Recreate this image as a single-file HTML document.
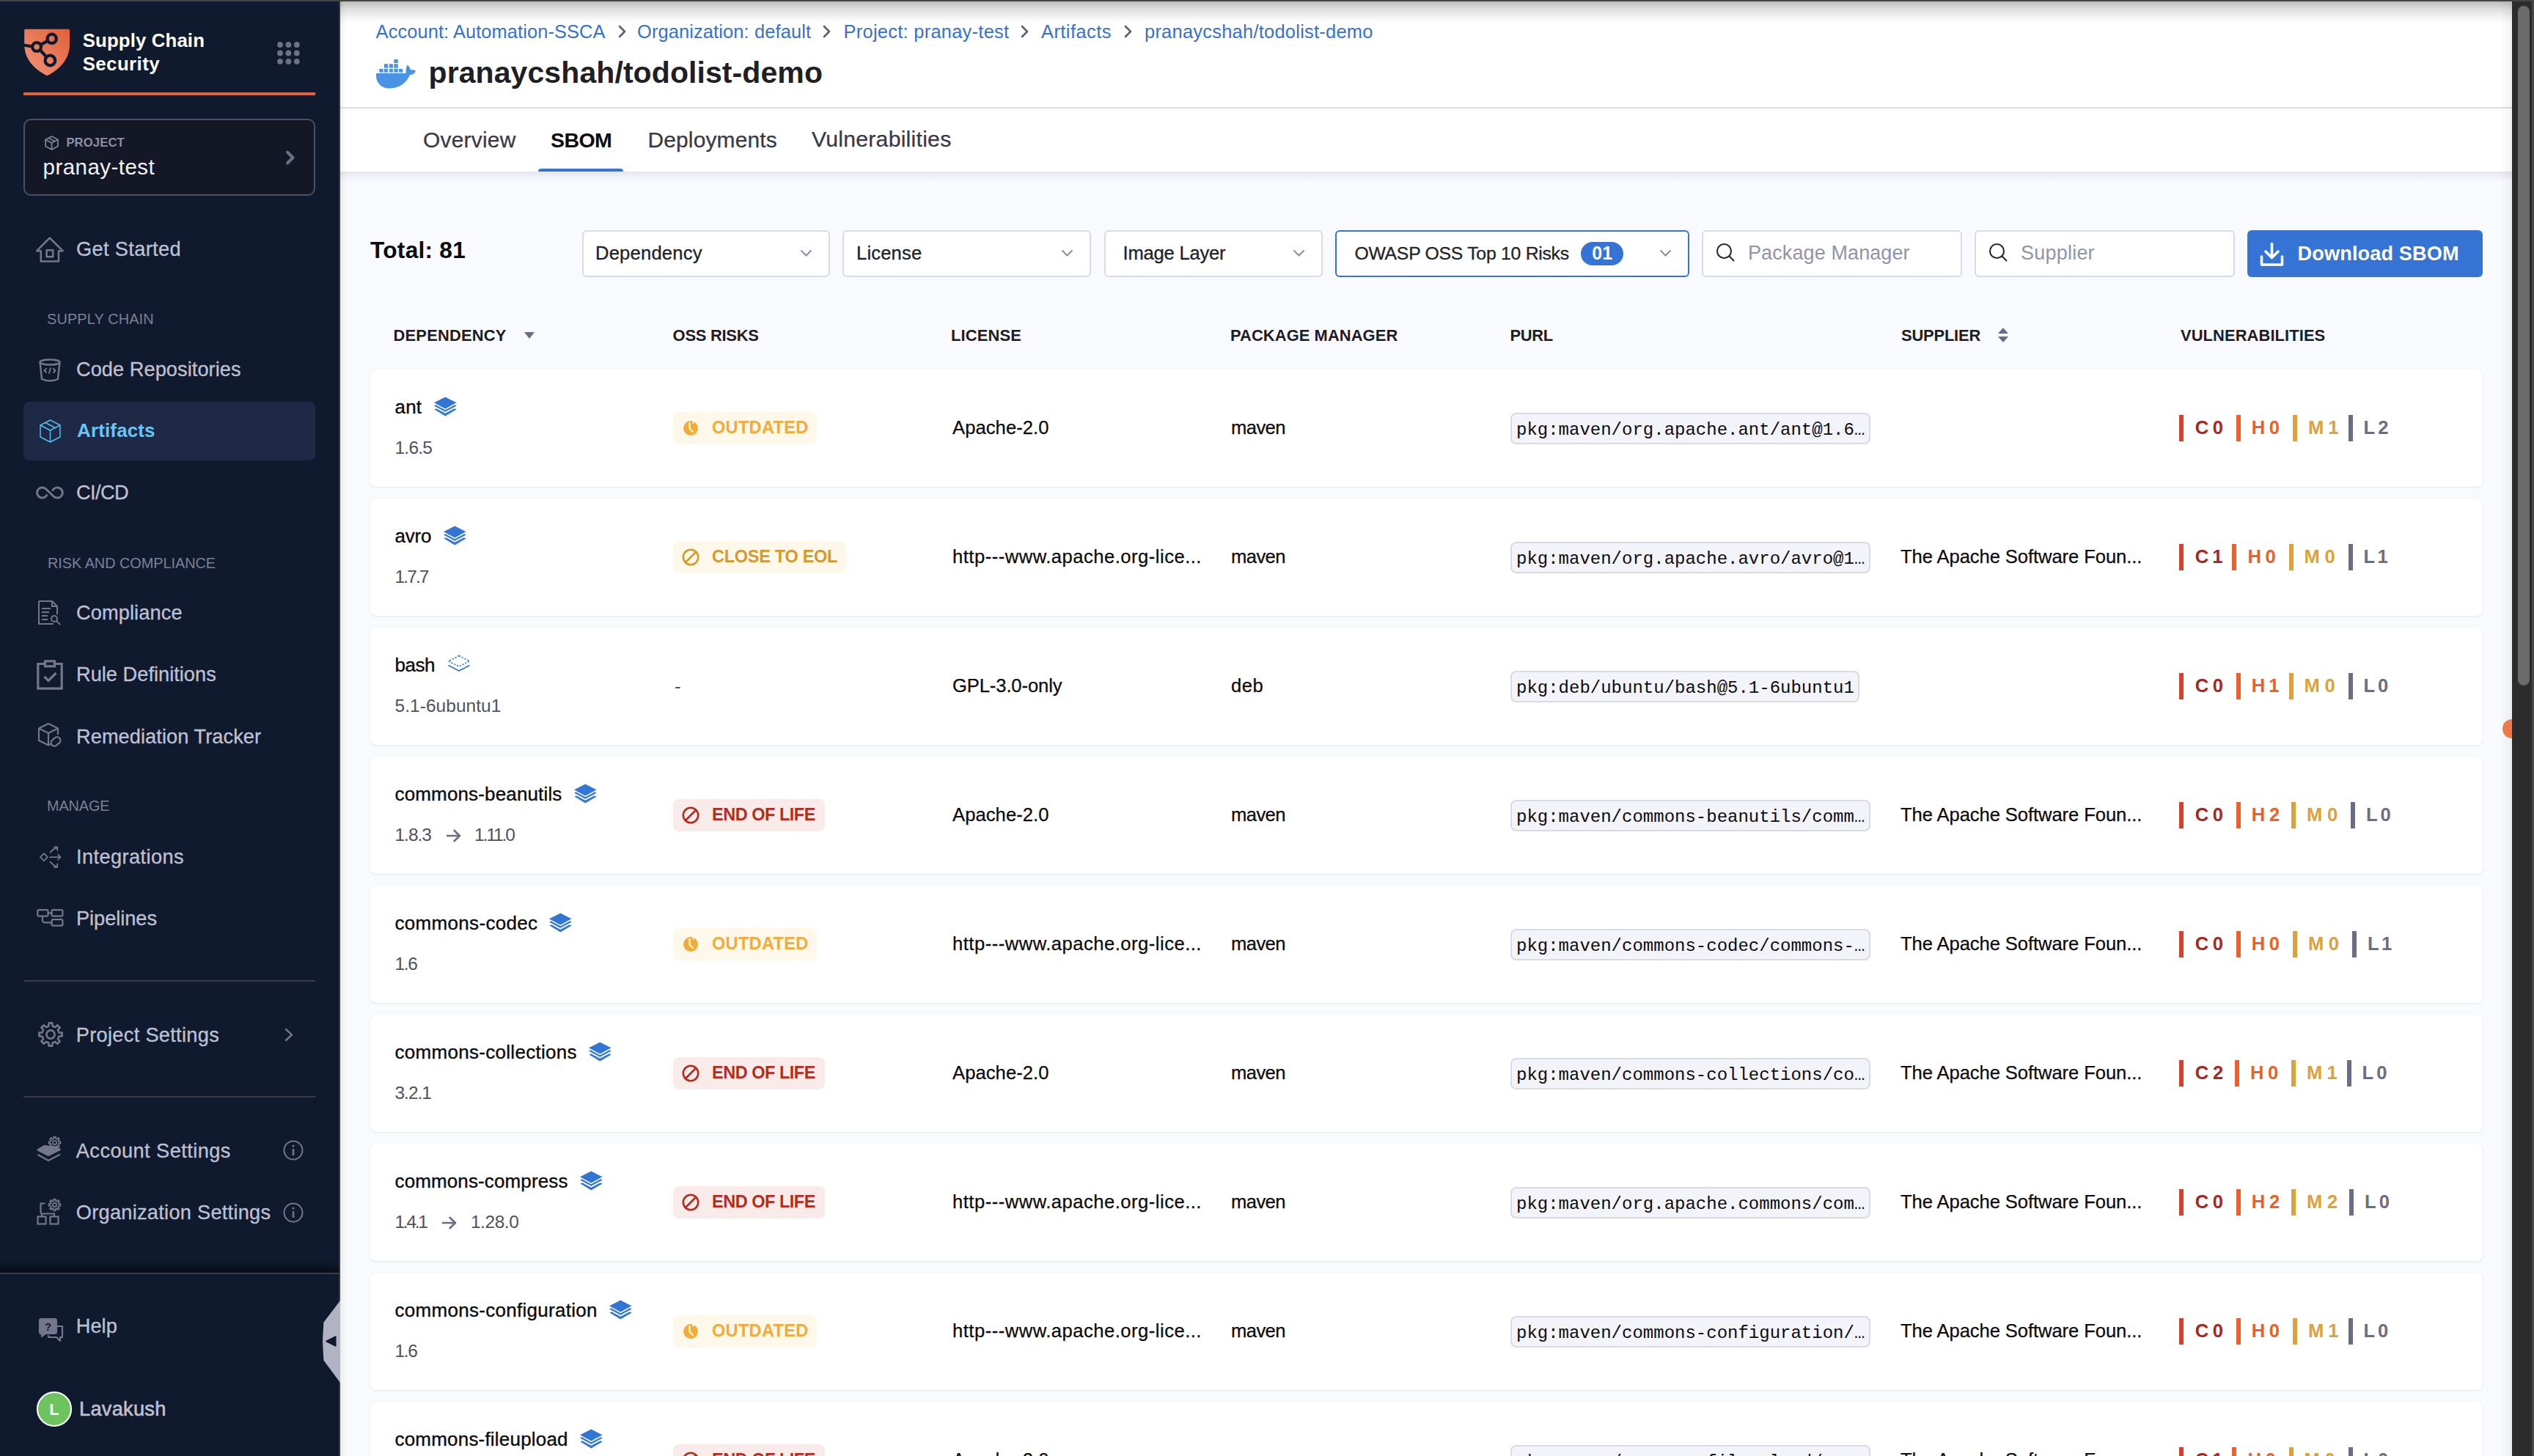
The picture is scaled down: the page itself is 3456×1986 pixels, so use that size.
<!DOCTYPE html>
<html><head><meta charset="utf-8"><title>SBOM</title>
<style>
html,body{margin:0;padding:0;}
body{width:3456px;height:1986px;overflow:hidden;position:relative;background:#f9fafd;font-family:'Liberation Sans', sans-serif;}
.a{position:absolute;}
.t{position:absolute;white-space:nowrap;}
svg.a{overflow:visible;}
</style></head><body>
<div class="a" style="left:464.0px;top:2.0px;width:2962.0px;height:1984.0px;background:#f9fafd;"></div><div class="a" style="left:464.0px;top:2.0px;width:2962.0px;height:232.0px;background:#ffffff;"></div><div class="a" style="left:464.0px;top:146.0px;width:2962.0px;height:2.0px;background:#dcdde6;"></div><div class="a" style="left:464.0px;top:234.0px;width:2962.0px;height:14.0px;background:linear-gradient(#e6e7ee,rgba(248,249,252,0));"></div><div class="a" style="left:464.0px;top:2.0px;width:2962.0px;height:32.0px;background:linear-gradient(rgba(0,0,0,0.26),rgba(0,0,0,0.12) 35%,rgba(0,0,0,0.03) 75%,rgba(0,0,0,0));"></div><div class="a" style="left:464.0px;top:2.0px;width:8.0px;height:1984.0px;background:linear-gradient(90deg,rgba(0,0,0,0.06),rgba(0,0,0,0));"></div><div class="a" style="left:3410.0px;top:2.0px;width:16.0px;height:1984.0px;background:linear-gradient(90deg,rgba(0,0,0,0),rgba(0,0,0,0.05));"></div><div class="a" style="left:0.0px;top:2.0px;width:462.0px;height:1984.0px;background:#0f1a2e;"></div><div class="a" style="left:462.0px;top:2.0px;width:2.0px;height:1984.0px;background:#34363f;"></div><div class="a" style="left:0.0px;top:0.0px;width:3456.0px;height:2.0px;background:#434544;"></div><div class="a" style="left:3413.0px;top:981.0px;width:26.0px;height:26.0px;background:#ee7a4b;border-radius:50%;"></div><div class="a" style="left:3426.0px;top:2.0px;width:30.0px;height:1984.0px;background:#2c2c2c;"></div><div class="a" style="left:3453.0px;top:2.0px;width:3.0px;height:1984.0px;background:#474747;"></div><div class="a" style="left:3434.0px;top:8.0px;width:16.0px;height:927.0px;background:#6b6b6b;border-radius:8px;"></div><svg class="a" style="left:28.0px;top:34.0px;" width="72" height="74" viewBox="0 0 72 74">
<defs><linearGradient id="lg" x1="1" y1="0" x2="0" y2="1">
<stop offset="0" stop-color="#e0603a"/><stop offset="1" stop-color="#f09678"/></linearGradient></defs>
<path d="M6.5 5.8 H65.5 Q67 5.8 67 7.5 V27 C67 45 55 60 36.3 69.3 C17 60 5.2 45 5.2 27 V7.5 Q5.2 5.8 6.5 5.8 Z" fill="url(#lg)"/>
<g stroke="#0f1a2e" stroke-width="4.3" fill="none">
<circle cx="42.7" cy="18.8" r="6.1"/>
<circle cx="22.1" cy="30" r="5.9"/>
<circle cx="40.4" cy="48.5" r="6.8"/>
<path d="M27.3 27.2 L37.3 21.7 M26.5 34 L35.3 43.6 M16.3 29.5 L4 27.5"/>
</g></svg><div class="t" style="left:112.7px;top:43.3px;font-size:25.80px;line-height:25.80px;color:#ffffff;font-weight:700;letter-spacing:0.128px;">Supply Chain</div><div class="t" style="left:112.7px;top:74.5px;font-size:25.80px;line-height:25.80px;color:#ffffff;font-weight:700;letter-spacing:0.433px;">Security</div><svg class="a" style="left:378.0px;top:57.0px;" width="31" height="31" viewBox="0 0 31 31"><circle cx="4.0" cy="4.0" r="3.9" fill="#6e7089"/><circle cx="4.0" cy="15.4" r="3.9" fill="#6e7089"/><circle cx="4.0" cy="26.8" r="3.9" fill="#6e7089"/><circle cx="15.4" cy="4.0" r="3.9" fill="#6e7089"/><circle cx="15.4" cy="15.4" r="3.9" fill="#6e7089"/><circle cx="15.4" cy="26.8" r="3.9" fill="#6e7089"/><circle cx="26.8" cy="4.0" r="3.9" fill="#6e7089"/><circle cx="26.8" cy="15.4" r="3.9" fill="#6e7089"/><circle cx="26.8" cy="26.8" r="3.9" fill="#6e7089"/></svg><div class="a" style="left:32.0px;top:126.0px;width:398.0px;height:4.0px;background:#e6623c;"></div><div class="a" style="left:32.0px;top:162.0px;width:398.0px;height:105.0px;background:#141826;border:2px solid #4d5064;border-radius:10px;box-sizing:border-box;"></div><svg class="a" style="left:60.0px;top:184.0px;" width="21" height="22" viewBox="0 0 21 22"><g fill="none" stroke="#7f8198" stroke-width="1.8" stroke-linejoin="round"><path d="M10.5 2 L19 6.5 V15.5 L10.5 20 L2 15.5 V6.5 Z"/><path d="M2 6.5 L10.5 11 L19 6.5 M10.5 11 V20 M6.2 4.2 L14.8 8.8"/></g></svg><div class="t" style="left:90.4px;top:187.2px;font-size:16.60px;line-height:16.60px;color:#8d8fa6;font-weight:700;letter-spacing:0.165px;">PROJECT</div><div class="t" style="left:58.6px;top:212.9px;font-size:29.50px;line-height:29.50px;color:#f2f2f7;letter-spacing:0.459px;">pranay-test</div><svg class="a" style="left:388.0px;top:204.0px;" width="16" height="22" viewBox="0 0 16 22"><path d="M4 3.5 L11.5 11 L4 18.5" fill="none" stroke="#6e7088" stroke-width="4" stroke-linecap="round" stroke-linejoin="round"/></svg><div class="t" style="left:104.0px;top:326.4px;font-size:27.20px;line-height:27.20px;color:#bfc0d2;letter-spacing:0.354px;-webkit-text-stroke:0.3px #bfc0d2;">Get Started</div><svg class="a" style="left:49.0px;top:323.0px;" width="38" height="36" viewBox="0 0 38 36"><g fill="none" stroke="#74768d" stroke-width="2.5" stroke-linejoin="round"><path d="M1.2 19.2 L18.8 1.5 L36.6 19.2 H31 V33.5 H6.8 V19.2 Z"/><rect x="14.6" y="18.2" width="8.6" height="9"/></g></svg><div class="t" style="left:64.0px;top:426.1px;font-size:19.90px;line-height:19.90px;color:#7d7f95;letter-spacing:0.141px;">SUPPLY CHAIN</div><div class="t" style="left:104.0px;top:489.6px;font-size:27.20px;line-height:27.20px;color:#bfc0d2;letter-spacing:0.054px;-webkit-text-stroke:0.3px #bfc0d2;">Code Repositories</div><svg class="a" style="left:52.0px;top:489.0px;" width="32" height="32" viewBox="0 0 32 32"><g fill="none" stroke="#74768d" stroke-width="2.4"><ellipse cx="16" cy="5" rx="13.5" ry="3.5"/><path d="M2.5 5 L5 28 Q16 33 27 28 L29.5 5"/><path d="M11.5 13.5 L8.5 16.5 L11.5 19.5 M20.5 13.5 L23.5 16.5 L20.5 19.5 M17.2 12.5 L14.8 20.5" stroke-width="2"/></g></svg><div class="a" style="left:32.0px;top:548.0px;width:398.0px;height:80.0px;background:#1e2a45;border-radius:8px;"></div><svg class="a" style="left:53.0px;top:571.0px;" width="31" height="34" viewBox="0 0 31 34"><g fill="none" stroke="#56bbee" stroke-width="1.5" stroke-linejoin="round"><path d="M15.5 2 L29 9 V25 L15.5 32 L2 25 V9 Z"/><path d="M2 9 L15.5 16 L29 9 M15.5 16 V32 M8.7 5.5 L22.3 12.5"/></g></svg><div class="t" style="left:105.0px;top:574.7px;font-size:25.90px;line-height:25.90px;color:#67c6f5;font-weight:700;letter-spacing:0.185px;">Artifacts</div><div class="t" style="left:104.0px;top:657.9px;font-size:27.20px;line-height:27.20px;color:#bfc0d2;letter-spacing:-0.603px;-webkit-text-stroke:0.3px #bfc0d2;">CI/CD</div><svg class="a" style="left:49.0px;top:661.0px;" width="38" height="22" viewBox="0 0 38 22"><path d="M14.8 14.5 A7.1 7.1 0 1 1 13.7 6 L24.1 16 A7.1 7.1 0 1 0 23 7.5" fill="none" stroke="#74768d" stroke-width="3" stroke-linecap="round"/></svg><div class="t" style="left:65.0px;top:758.9px;font-size:19.90px;line-height:19.90px;color:#7d7f95;letter-spacing:-0.045px;">RISK AND COMPLIANCE</div><div class="t" style="left:104.0px;top:822.4px;font-size:27.20px;line-height:27.20px;color:#bfc0d2;letter-spacing:0.111px;-webkit-text-stroke:0.3px #bfc0d2;">Compliance</div><svg class="a" style="left:51.0px;top:818.0px;" width="33" height="35" viewBox="0 0 33 35"><g fill="none" stroke="#74768d" stroke-width="2"><path d="M2 2 H20 L27 9 V20 M2 2 V33 H22"/><path d="M20 2 V9 H27 M6 12 H18 M6 17 H16 M6 22 H14 M6 27 H14"/><circle cx="23" cy="26" r="4"/><path d="M26 29 L31 34"/></g></svg><div class="t" style="left:104.0px;top:905.9px;font-size:27.20px;line-height:27.20px;color:#bfc0d2;letter-spacing:0.022px;-webkit-text-stroke:0.3px #bfc0d2;">Rule Definitions</div><svg class="a" style="left:50.0px;top:900.0px;" width="36" height="41" viewBox="0 0 36 41"><g fill="none" stroke="#74768d" stroke-width="3.2"><path d="M10 5.5 H1.8 V39.2 H34.2 V5.5 H26"/><rect x="11.5" y="1.8" width="13" height="7"/><path d="M10.5 23 L16 28.5 L26.5 18"/></g></svg><div class="t" style="left:104.0px;top:990.5px;font-size:27.20px;line-height:27.20px;color:#bfc0d2;letter-spacing:0.071px;-webkit-text-stroke:0.3px #bfc0d2;">Remediation Tracker</div><svg class="a" style="left:51.0px;top:985.0px;" width="34" height="38" viewBox="0 0 34 38"><g fill="none" stroke="#74768d" stroke-width="2.2" stroke-linejoin="round"><path d="M15 2 L28 8.5 V17 M15 2 L2 8.5 V25 L15 31.5 L18 30 M2 8.5 L15 15 L28 8.5 M15 15 V31.5"/><rect x="18" y="22" width="14" height="9" rx="4.5" transform="rotate(-40 25 26.5)"/></g></svg><div class="t" style="left:64.0px;top:1090.1px;font-size:19.90px;line-height:19.90px;color:#7d7f95;letter-spacing:-0.131px;">MANAGE</div><div class="t" style="left:104.0px;top:1154.9px;font-size:27.20px;line-height:27.20px;color:#bfc0d2;letter-spacing:0.408px;-webkit-text-stroke:0.3px #bfc0d2;">Integrations</div><svg class="a" style="left:54.0px;top:1154.0px;" width="32" height="31" viewBox="0 0 32 31"><g fill="none" stroke="#74768d" stroke-width="1.8" stroke-linecap="round" stroke-linejoin="round"><path d="M5.9 10.1 L10.9 15.1 L5.9 20.1 L0.9 15.1 Z"/><path d="M14.2 15.1 H28.5 M25 11.6 L28.5 15.1 L25 18.6"/><path d="M14.5 8.6 Q18.5 3.8 24.2 1.6 M19.8 1.4 H24.2 V5.8"/><path d="M14.5 21.6 Q18.5 26.4 24.2 28.6 M19.8 28.8 H24.2 V24.4"/></g></svg><div class="t" style="left:104.0px;top:1238.9px;font-size:27.20px;line-height:27.20px;color:#bfc0d2;letter-spacing:-0.044px;-webkit-text-stroke:0.3px #bfc0d2;">Pipelines</div><svg class="a" style="left:50.0px;top:1240.0px;" width="37" height="24" viewBox="0 0 37 24"><g fill="none" stroke="#74768d" stroke-width="2.2"><rect x="1.3" y="1.2" width="14.2" height="8.4" rx="1.6"/><rect x="20.6" y="1.2" width="14.8" height="8.4" rx="1.6"/><rect x="20.6" y="14.2" width="14.8" height="8.4" rx="1.6"/><path d="M15.5 5.4 H20.6 M7.9 9.6 V14.6 Q7.9 18.4 11.7 18.4 H20.6"/></g></svg><div class="a" style="left:32.0px;top:1337.0px;width:398.0px;height:2.0px;background:#3a3c4b;"></div><div class="t" style="left:103.8px;top:1397.9px;font-size:27.20px;line-height:27.20px;color:#bfc0d2;letter-spacing:0.302px;-webkit-text-stroke:0.3px #bfc0d2;">Project Settings</div><svg class="a" style="left:51.0px;top:1393.0px;" width="36" height="36" viewBox="0 0 36 36"><g fill="none" stroke="#74768d" stroke-width="2.6" stroke-linejoin="round"><path d="M15.43 6.48 L15.66 2.37 L20.34 2.37 L20.57 6.48 L24.32 8.04 L27.40 5.30 L30.70 8.60 L27.96 11.68 L29.52 15.43 L33.63 15.66 L33.63 20.34 L29.52 20.57 L27.96 24.32 L30.70 27.40 L27.40 30.70 L24.32 27.96 L20.57 29.52 L20.34 33.63 L15.66 33.63 L15.43 29.52 L11.68 27.96 L8.60 30.70 L5.30 27.40 L8.04 24.32 L6.48 20.57 L2.37 20.34 L2.37 15.66 L6.48 15.43 L8.04 11.68 L5.30 8.60 L8.60 5.30 L11.68 8.04 Z"/><circle cx="18" cy="18" r="5.6"/></g></svg><svg class="a" style="left:386.0px;top:1401.0px;" width="16" height="21" viewBox="0 0 16 21"><path d="M4 3 L12 10.5 L4 18" fill="none" stroke="#74768d" stroke-width="2.4" stroke-linecap="round" stroke-linejoin="round"/></svg><div class="a" style="left:32.0px;top:1495.0px;width:398.0px;height:2.0px;background:#3a3c4b;"></div><div class="t" style="left:103.8px;top:1555.7px;font-size:27.20px;line-height:27.20px;color:#bfc0d2;letter-spacing:0.434px;-webkit-text-stroke:0.3px #bfc0d2;">Account Settings</div><svg class="a" style="left:50.0px;top:1550.0px;" width="34" height="38" viewBox="0 0 34 38"><g fill="none" stroke="#74768d" stroke-width="2.2" stroke-linejoin="round"><path d="M11 13 L1.5 18.5 L8 22 L16 26 L32 18 L26 15 Z" fill="#74768d"/><path d="M11 13 L1.5 18.5"/><path d="M1.5 25 L16 33 L32 24.5"/><path d="M23.21 3.05 L23.22 0.60 L25.78 0.60 L25.79 3.05 L27.44 3.74 L29.18 2.01 L30.99 3.82 L29.26 5.56 L29.95 7.21 L32.40 7.22 L32.40 9.78 L29.95 9.79 L29.26 11.44 L30.99 13.18 L29.18 14.99 L27.44 13.26 L25.79 13.95 L25.78 16.40 L23.22 16.40 L23.21 13.95 L21.56 13.26 L19.82 14.99 L18.01 13.18 L19.74 11.44 L19.05 9.79 L16.60 9.78 L16.60 7.22 L19.05 7.21 L19.74 5.56 L18.01 3.82 L19.82 2.01 L21.56 3.74 Z" stroke-width="1.8"/><circle cx="24.5" cy="8.5" r="2.6" stroke-width="1.8"/></g></svg><svg class="a" style="left:386.0px;top:1555.0px;" width="28" height="28" viewBox="0 0 28 28"><g fill="none" stroke="#74768d" stroke-width="2"><circle cx="14" cy="14" r="12.5"/><path d="M14 12 V21" stroke-width="2.6"/><circle cx="14" cy="8" r="1.6" fill="#74768d" stroke="none"/></g></svg><div class="t" style="left:103.8px;top:1639.6px;font-size:27.20px;line-height:27.20px;color:#bfc0d2;letter-spacing:0.268px;-webkit-text-stroke:0.3px #bfc0d2;">Organization Settings</div><svg class="a" style="left:50.0px;top:1634.0px;" width="34" height="38" viewBox="0 0 34 38"><g fill="none" stroke="#74768d" stroke-width="2.2"><rect x="1.5" y="25.5" width="11" height="10"/><rect x="18.5" y="25.5" width="11" height="10"/><path d="M11.5 7.5 H5.5 V21.5 M7 25.5 V21.5 H24 V25.5"/><path d="M23.21 4.05 L23.22 1.60 L25.78 1.60 L25.79 4.05 L27.44 4.74 L29.18 3.01 L30.99 4.82 L29.26 6.56 L29.95 8.21 L32.40 8.22 L32.40 10.78 L29.95 10.79 L29.26 12.44 L30.99 14.18 L29.18 15.99 L27.44 14.26 L25.79 14.95 L25.78 17.40 L23.22 17.40 L23.21 14.95 L21.56 14.26 L19.82 15.99 L18.01 14.18 L19.74 12.44 L19.05 10.79 L16.60 10.78 L16.60 8.22 L19.05 8.21 L19.74 6.56 L18.01 4.82 L19.82 3.01 L21.56 4.74 Z" stroke-width="1.8" stroke-linejoin="round"/><circle cx="24.5" cy="9.5" r="2.6" stroke-width="1.8"/></g></svg><svg class="a" style="left:386.0px;top:1640.0px;" width="28" height="28" viewBox="0 0 28 28"><g fill="none" stroke="#74768d" stroke-width="2"><circle cx="14" cy="14" r="12.5"/><path d="M14 12 V21" stroke-width="2.6"/><circle cx="14" cy="8" r="1.6" fill="#74768d" stroke="none"/></g></svg><div class="a" style="left:0.0px;top:1720.0px;width:462.0px;height:16.0px;background:linear-gradient(rgba(0,0,0,0),rgba(0,0,0,0.5));"></div><div class="a" style="left:0.0px;top:1736.0px;width:462.0px;height:2.0px;background:#3c3e4e;"></div><div class="t" style="left:103.8px;top:1794.9px;font-size:27.20px;line-height:27.20px;color:#bfc0d2;letter-spacing:0.03px;-webkit-text-stroke:0.3px #bfc0d2;">Help</div><svg class="a" style="left:52.0px;top:1797.0px;" width="37" height="34" viewBox="0 0 37 34"><g fill="none" stroke="#74768d" stroke-width="2.2" stroke-linejoin="round"><path d="M8 12 H33 V27 H30 V32 L25 27 H14 V24"/><path d="M4.5 2 H22.5 Q25 2 25 4.5 V19.5 Q25 22 22.5 22 H10 L5 26 V22 H4.5 Q2 22 2 19.5 V4.5 Q2 2 4.5 2 Z" fill="#74768d"/></g><text x="13.5" y="18" font-family="Liberation Sans" font-weight="700" font-size="15" fill="#0f1a2e" text-anchor="middle">?</text></svg><svg class="a" style="left:49.0px;top:1897.0px;" width="50" height="50" viewBox="0 0 50 50"><circle cx="25" cy="25" r="23" fill="#6dc45f" stroke="#ffffff" stroke-width="2.2"/><text x="25" y="33" font-family="Liberation Sans" font-weight="700" font-size="22" fill="#ffffff" text-anchor="middle">L</text></svg><div class="t" style="left:108.0px;top:1907.9px;font-size:27.20px;line-height:27.20px;color:#bfc0d2;letter-spacing:0.27px;-webkit-text-stroke:0.6px #bfc0d2;">Lavakush</div><svg class="a" style="left:438.0px;top:1772.0px;" width="26" height="116" viewBox="0 0 26 116"><path d="M26 2 L3.4 31.7 L2 57 L3.4 83.6 L26 113.9 Z" fill="#b1b2c4"/><path d="M19.8 51 L7 57.5 L19.8 64 Z" fill="#0f1a2e" stroke="#0f1a2e" stroke-width="1.5" stroke-linejoin="round"/></svg><div class="t" style="left:512.6px;top:30.8px;font-size:25.40px;line-height:25.40px;color:#3572d0;letter-spacing:0.1px;">Account: Automation-SSCA</div><div class="t" style="left:869.0px;top:30.8px;font-size:25.40px;line-height:25.40px;color:#3572d0;letter-spacing:0.136px;">Organization: default</div><div class="t" style="left:1150.5px;top:30.8px;font-size:25.40px;line-height:25.40px;color:#3572d0;letter-spacing:0.289px;">Project: pranay-test</div><div class="t" style="left:1420.0px;top:30.8px;font-size:25.40px;line-height:25.40px;color:#3572d0;letter-spacing:0.473px;">Artifacts</div><div class="t" style="left:1561.0px;top:30.8px;font-size:25.40px;line-height:25.40px;color:#3572d0;letter-spacing:0.273px;">pranaycshah/todolist-demo</div><svg class="a" style="left:842.5px;top:34.0px;" width="11" height="18" viewBox="0 0 11 18"><path d="M2 2 L9 9 L2 16" fill="none" stroke="#5b5d70" stroke-width="2.6" stroke-linecap="round" stroke-linejoin="round"/></svg><svg class="a" style="left:1122.0px;top:34.0px;" width="11" height="18" viewBox="0 0 11 18"><path d="M2 2 L9 9 L2 16" fill="none" stroke="#5b5d70" stroke-width="2.6" stroke-linecap="round" stroke-linejoin="round"/></svg><svg class="a" style="left:1392.0px;top:34.0px;" width="11" height="18" viewBox="0 0 11 18"><path d="M2 2 L9 9 L2 16" fill="none" stroke="#5b5d70" stroke-width="2.6" stroke-linecap="round" stroke-linejoin="round"/></svg><svg class="a" style="left:1532.5px;top:34.0px;" width="11" height="18" viewBox="0 0 11 18"><path d="M2 2 L9 9 L2 16" fill="none" stroke="#5b5d70" stroke-width="2.6" stroke-linecap="round" stroke-linejoin="round"/></svg><svg class="a" style="left:508.0px;top:76.0px;" width="64" height="48" viewBox="0 0 64 48"><g fill="#4a93e3"><rect x="29.2" y="4.9" width="5.599999999999998" height="5"/><rect x="16" y="11.2" width="5.100000000000001" height="5.5"/><rect x="22.9" y="11.2" width="5.0" height="5.5"/><rect x="29.2" y="11.2" width="5.599999999999998" height="5.5"/><rect x="9.2" y="18" width="5.5" height="4.7"/><rect x="16" y="18" width="5.100000000000001" height="4.7"/><rect x="22.9" y="18" width="5.0" height="4.7"/><rect x="29.2" y="18" width="5.599999999999998" height="4.7"/><rect x="36.1" y="18" width="5.100000000000001" height="4.7"/><path d="M5 24.1 H45.5 C46 21 45 17.5 47.5 12.5 C50 14.5 51.5 16.5 52 19.5 C54.5 19 57 19.5 59 20.5 C58 24 55 26 51 26 C46 38 36 44.5 23 44.5 C12 44.5 5 37 5 27 Z"/></g></svg><div class="t" style="left:584.5px;top:79.2px;font-size:41.00px;line-height:41.00px;color:#1f2026;font-weight:700;letter-spacing:0.087px;">pranaycshah/todolist-demo</div><div class="t" style="left:577.0px;top:175.6px;font-size:29.90px;line-height:29.90px;color:#383946;letter-spacing:0.24px;-webkit-text-stroke:0.25px #383946;">Overview</div><div class="t" style="left:751.0px;top:176.8px;font-size:28.50px;line-height:28.50px;color:#0b0b0d;font-weight:700;letter-spacing:-0.597px;">SBOM</div><div class="t" style="left:883.5px;top:175.6px;font-size:29.90px;line-height:29.90px;color:#383946;letter-spacing:0.179px;-webkit-text-stroke:0.25px #383946;">Deployments</div><div class="t" style="left:1107.0px;top:175.3px;font-size:30.20px;line-height:30.20px;color:#383946;letter-spacing:0.244px;-webkit-text-stroke:0.25px #383946;">Vulnerabilities</div><div class="a" style="left:734.0px;top:230.0px;width:116.0px;height:4.0px;background:#3573d4;border-radius:4px 4px 0 0;"></div><div class="t" style="left:505.0px;top:326.4px;font-size:31.70px;line-height:31.70px;color:#0b0b0d;font-weight:700;letter-spacing:0.238px;">Total: 81</div><div class="a" style="left:794.0px;top:314.0px;width:338.0px;height:64.0px;background:#ffffff;border:2px solid #d9dae5;border-radius:6px;box-sizing:border-box;"></div><div class="t" style="left:812.0px;top:333.2px;font-size:25.60px;line-height:25.60px;color:#22222a;letter-spacing:0.198px;-webkit-text-stroke:0.3px #22222a;">Dependency</div><svg class="a" style="left:1091.0px;top:340.0px;" width="17" height="11" viewBox="0 0 17 11"><path d="M1.5 1.5 L8.5 8.5 L15.5 1.5" fill="none" stroke="#8b8da3" stroke-width="2"/></svg><div class="a" style="left:1149.0px;top:314.0px;width:339.0px;height:64.0px;background:#ffffff;border:2px solid #d9dae5;border-radius:6px;box-sizing:border-box;"></div><div class="t" style="left:1168.0px;top:333.2px;font-size:25.60px;line-height:25.60px;color:#22222a;letter-spacing:0.149px;-webkit-text-stroke:0.3px #22222a;">License</div><svg class="a" style="left:1447.0px;top:340.0px;" width="17" height="11" viewBox="0 0 17 11"><path d="M1.5 1.5 L8.5 8.5 L15.5 1.5" fill="none" stroke="#8b8da3" stroke-width="2"/></svg><div class="a" style="left:1506.0px;top:314.0px;width:298.0px;height:64.0px;background:#ffffff;border:2px solid #d9dae5;border-radius:6px;box-sizing:border-box;"></div><div class="t" style="left:1531.6px;top:333.2px;font-size:25.60px;line-height:25.60px;color:#22222a;letter-spacing:-0.237px;-webkit-text-stroke:0.3px #22222a;">Image Layer</div><svg class="a" style="left:1763.0px;top:340.0px;" width="17" height="11" viewBox="0 0 17 11"><path d="M1.5 1.5 L8.5 8.5 L15.5 1.5" fill="none" stroke="#8b8da3" stroke-width="2"/></svg><div class="a" style="left:1821.0px;top:314.0px;width:483.0px;height:64.0px;background:#ffffff;border:2px solid #3a72d0;border-radius:6px;box-sizing:border-box;"></div><div class="t" style="left:1847.4px;top:333.9px;font-size:24.80px;line-height:24.80px;color:#22222a;letter-spacing:-0.278px;-webkit-text-stroke:0.3px #22222a;">OWASP OSS Top 10 Risks</div><svg class="a" style="left:2263.0px;top:340.0px;" width="17" height="11" viewBox="0 0 17 11"><path d="M1.5 1.5 L8.5 8.5 L15.5 1.5" fill="none" stroke="#8b8da3" stroke-width="2"/></svg><div class="a" style="left:2156.0px;top:330.0px;width:58.0px;height:32.0px;background:#3573d4;border-radius:16px;"></div><div class="t" style="left:2171.3px;top:333.2px;font-size:25.00px;line-height:25.00px;color:#ffffff;font-weight:700;">01</div><div class="a" style="left:2321.0px;top:314.0px;width:355.0px;height:64.0px;background:#ffffff;border:2px solid #d9dae5;border-radius:6px;box-sizing:border-box;"></div><svg class="a" style="left:2340.0px;top:331.0px;" width="27" height="28" viewBox="0 0 27 28"><g fill="none" stroke="#22222a" stroke-width="2"><circle cx="11.5" cy="11.5" r="9.5"/><path d="M18.5 18.5 L24.5 24.5" stroke-linecap="round"/></g></svg><div class="t" style="left:2384.0px;top:332.1px;font-size:27.00px;line-height:27.00px;color:#9293ab;letter-spacing:0.105px;">Package Manager</div><div class="a" style="left:2693.0px;top:314.0px;width:355.0px;height:64.0px;background:#ffffff;border:2px solid #d9dae5;border-radius:6px;box-sizing:border-box;"></div><svg class="a" style="left:2712.0px;top:331.0px;" width="27" height="28" viewBox="0 0 27 28"><g fill="none" stroke="#22222a" stroke-width="2"><circle cx="11.5" cy="11.5" r="9.5"/><path d="M18.5 18.5 L24.5 24.5" stroke-linecap="round"/></g></svg><div class="t" style="left:2756.0px;top:332.1px;font-size:27.00px;line-height:27.00px;color:#9293ab;letter-spacing:0.222px;">Supplier</div><div class="a" style="left:3065.0px;top:314.0px;width:321.0px;height:64.0px;background:#3573d4;border-radius:6px;"></div><svg class="a" style="left:3082.0px;top:329.5px;" width="33" height="34" viewBox="0 0 33 34"><g fill="none" stroke="#ffffff" stroke-width="3.6" stroke-linecap="round" stroke-linejoin="round"><path d="M16.5 2.5 V21 M8 13 L16.5 21.5 L25 13 M2.5 20 V31 H30.5 V20"/></g></svg><div class="t" style="left:3133.6px;top:332.0px;font-size:27.10px;line-height:27.10px;color:#ffffff;font-weight:700;letter-spacing:0.144px;">Download SBOM</div><div class="t" style="left:536.6px;top:446.9px;font-size:21.90px;line-height:21.90px;color:#1c1c27;font-weight:700;letter-spacing:0.177px;">DEPENDENCY</div><svg class="a" style="left:714.0px;top:452.0px;" width="16" height="11" viewBox="0 0 16 11"><path d="M1 1 H15 L8 10 Z" fill="#6b6d85"/></svg><div class="t" style="left:917.6px;top:446.9px;font-size:21.90px;line-height:21.90px;color:#1c1c27;font-weight:700;letter-spacing:-0.244px;">OSS RISKS</div><div class="t" style="left:1297.0px;top:446.9px;font-size:21.90px;line-height:21.90px;color:#1c1c27;font-weight:700;letter-spacing:0.166px;">LICENSE</div><div class="t" style="left:1678.0px;top:446.9px;font-size:21.90px;line-height:21.90px;color:#1c1c27;font-weight:700;letter-spacing:0.085px;">PACKAGE MANAGER</div><div class="t" style="left:2059.5px;top:446.9px;font-size:21.90px;line-height:21.90px;color:#1c1c27;font-weight:700;letter-spacing:-0.301px;">PURL</div><div class="t" style="left:2593.0px;top:446.9px;font-size:21.90px;line-height:21.90px;color:#1c1c27;font-weight:700;letter-spacing:-0.173px;">SUPPLIER</div><svg class="a" style="left:2724.0px;top:445.0px;" width="16" height="24" viewBox="0 0 16 24"><path d="M1 10 L8 2 L15 10 Z M1 14 L8 22 L15 14 Z" fill="#6b6d85"/></svg><div class="t" style="left:2974.0px;top:446.9px;font-size:21.90px;line-height:21.90px;color:#1c1c27;font-weight:700;letter-spacing:0.101px;">VULNERABILITIES</div><div class="a" style="left:505.0px;top:504.0px;width:2881.0px;height:160.0px;background:#ffffff;border-radius:8px;box-shadow:0 1px 3px rgba(40,41,61,0.08),0 0 1px rgba(40,41,61,0.10);"></div><div class="t" style="left:538.5px;top:541.5px;font-size:26.00px;line-height:26.00px;color:#0b0b0d;letter-spacing:0.208px;-webkit-text-stroke:0.35px #0b0b0d;">ant</div><svg class="a" style="left:591.0px;top:540.5px;" width="33" height="28" viewBox="0 0 33 28"><g fill="#3176d4"><path d="M16.3 0.5 L31.5 8.3 L16.3 16.6 L1 8.3 Z"/><path d="M1 12.5 L3.5 11.2 L16.3 18.2 L29.3 11.2 L31.8 12.5 L16.3 20.8 Z"/><path d="M1.5 17.5 L4 16.2 L16.3 22.8 L28.8 16.2 L31.6 17.5 L16.3 26.5 Z"/></g></svg><div class="t" style="left:538.5px;top:598.9px;font-size:24.50px;line-height:24.50px;color:#4f5162;letter-spacing:-0.755px;">1.6.5</div><div class="a" style="left:918.0px;top:562.0px;width:196.0px;height:44.0px;background:#fef8ea;border-radius:8px;"></div><svg class="a" style="left:931.0px;top:573.0px;" width="22" height="22" viewBox="0 0 22 22"><circle cx="11" cy="11" r="10" fill="#f0ab38"/><path d="M9.5 4 V11.5 L14 16" fill="none" stroke="#fef8ea" stroke-width="2.2" stroke-linecap="round"/><path d="M14.5 1 V5" stroke="#fef8ea" stroke-width="2"/></svg><div class="t" style="left:971.0px;top:572.0px;font-size:23.50px;line-height:23.50px;color:#f0ab38;font-weight:700;letter-spacing:0.329px;">OUTDATED</div><div class="t" style="left:1299.0px;top:571.4px;font-size:25.60px;line-height:25.60px;color:#0b0b0d;letter-spacing:0.066px;-webkit-text-stroke:0.25px #0b0b0d;">Apache-2.0</div><div class="t" style="left:1679.0px;top:571.4px;font-size:25.60px;line-height:25.60px;color:#0b0b0d;letter-spacing:-0.576px;-webkit-text-stroke:0.25px #0b0b0d;">maven</div><div class="a" style="left:2060.0px;top:563.0px;width:491.0px;height:43.0px;background:#f3f3fa;border:2px solid #d9dae5;border-radius:8px;box-sizing:border-box;"></div><div class="t" style="left:2068.0px;top:575.2px;font-size:24.00px;line-height:24.00px;color:#0b0b0d;font-family:'Liberation Mono', monospace;">pkg:maven/org.apache.ant/ant@1.6…</div><div class="a" style="left:2972.0px;top:566.0px;width:6.0px;height:36.0px;background:#d6412f;"></div><div class="t" style="left:2993.7px;top:570.7px;font-size:25.60px;line-height:25.60px;color:#a8281d;font-weight:700;">C</div><div class="t" style="left:3017.7px;top:570.7px;font-size:25.60px;line-height:25.60px;color:#a8281d;font-weight:700;">0</div><div class="a" style="left:3050.0px;top:566.0px;width:6.0px;height:36.0px;background:#ee5f2c;"></div><div class="t" style="left:3070.8px;top:570.7px;font-size:25.60px;line-height:25.60px;color:#ec5f2b;font-weight:700;">H</div><div class="t" style="left:3094.8px;top:570.7px;font-size:25.60px;line-height:25.60px;color:#ec5f2b;font-weight:700;">0</div><div class="a" style="left:3127.0px;top:566.0px;width:6.0px;height:36.0px;background:#dca13a;"></div><div class="t" style="left:3147.9px;top:570.7px;font-size:25.60px;line-height:25.60px;color:#dca13a;font-weight:700;">M</div><div class="t" style="left:3175.3px;top:570.7px;font-size:25.60px;line-height:25.60px;color:#dca13a;font-weight:700;">1</div><div class="a" style="left:3203.0px;top:566.0px;width:6.0px;height:36.0px;background:#6b6d85;"></div><div class="t" style="left:3223.5px;top:570.7px;font-size:25.60px;line-height:25.60px;color:#6b6d85;font-weight:700;">L</div><div class="t" style="left:3243.3px;top:570.7px;font-size:25.60px;line-height:25.60px;color:#6b6d85;font-weight:700;">2</div><div class="a" style="left:505.0px;top:680.0px;width:2881.0px;height:160.0px;background:#ffffff;border-radius:8px;box-shadow:0 1px 3px rgba(40,41,61,0.08),0 0 1px rgba(40,41,61,0.10);"></div><div class="t" style="left:538.5px;top:717.5px;font-size:26.00px;line-height:26.00px;color:#0b0b0d;letter-spacing:-0.24px;-webkit-text-stroke:0.35px #0b0b0d;">avro</div><svg class="a" style="left:604.0px;top:716.5px;" width="33" height="28" viewBox="0 0 33 28"><g fill="#3176d4"><path d="M16.3 0.5 L31.5 8.3 L16.3 16.6 L1 8.3 Z"/><path d="M1 12.5 L3.5 11.2 L16.3 18.2 L29.3 11.2 L31.8 12.5 L16.3 20.8 Z"/><path d="M1.5 17.5 L4 16.2 L16.3 22.8 L28.8 16.2 L31.6 17.5 L16.3 26.5 Z"/></g></svg><div class="t" style="left:538.5px;top:774.9px;font-size:24.50px;line-height:24.50px;color:#4f5162;letter-spacing:-1.88px;">1.7.7</div><div class="a" style="left:918.0px;top:738.0px;width:236.0px;height:44.0px;background:#fdf8ea;border-radius:8px;"></div><svg class="a" style="left:930.0px;top:748.0px;" width="24" height="24" viewBox="0 0 24 24"><g fill="none" stroke="#d69a2c" stroke-width="2.6"><circle cx="12" cy="12" r="10.2"/><path d="M5 19 L19 5"/></g></svg><div class="t" style="left:971.0px;top:748.0px;font-size:23.50px;line-height:23.50px;color:#d69a2c;font-weight:700;letter-spacing:-0.284px;">CLOSE TO EOL</div><div class="t" style="left:1299.0px;top:747.4px;font-size:25.60px;line-height:25.60px;color:#0b0b0d;letter-spacing:0.49px;-webkit-text-stroke:0.25px #0b0b0d;">http---www.apache.org-lice...</div><div class="t" style="left:1679.0px;top:747.4px;font-size:25.60px;line-height:25.60px;color:#0b0b0d;letter-spacing:-0.576px;-webkit-text-stroke:0.25px #0b0b0d;">maven</div><div class="a" style="left:2060.0px;top:739.0px;width:491.0px;height:43.0px;background:#f3f3fa;border:2px solid #d9dae5;border-radius:8px;box-sizing:border-box;"></div><div class="t" style="left:2068.0px;top:751.2px;font-size:24.00px;line-height:24.00px;color:#0b0b0d;font-family:'Liberation Mono', monospace;">pkg:maven/org.apache.avro/avro@1…</div><div class="t" style="left:2592.0px;top:747.2px;font-size:25.60px;line-height:25.60px;color:#0b0b0d;letter-spacing:-0.079px;-webkit-text-stroke:0.25px #0b0b0d;">The Apache Software Foun...</div><div class="a" style="left:2972.0px;top:742.0px;width:6.0px;height:36.0px;background:#d6412f;"></div><div class="t" style="left:2993.7px;top:746.7px;font-size:25.60px;line-height:25.60px;color:#a8281d;font-weight:700;">C</div><div class="t" style="left:3017.2px;top:746.7px;font-size:25.60px;line-height:25.60px;color:#a8281d;font-weight:700;">1</div><div class="a" style="left:3044.0px;top:742.0px;width:6.0px;height:36.0px;background:#ee5f2c;"></div><div class="t" style="left:3065.4px;top:746.7px;font-size:25.60px;line-height:25.60px;color:#ec5f2b;font-weight:700;">H</div><div class="t" style="left:3089.4px;top:746.7px;font-size:25.60px;line-height:25.60px;color:#ec5f2b;font-weight:700;">0</div><div class="a" style="left:3122.0px;top:742.0px;width:6.0px;height:36.0px;background:#dca13a;"></div><div class="t" style="left:3142.5px;top:746.7px;font-size:25.60px;line-height:25.60px;color:#dca13a;font-weight:700;">M</div><div class="t" style="left:3170.4px;top:746.7px;font-size:25.60px;line-height:25.60px;color:#dca13a;font-weight:700;">0</div><div class="a" style="left:3203.0px;top:742.0px;width:6.0px;height:36.0px;background:#6b6d85;"></div><div class="t" style="left:3223.5px;top:746.7px;font-size:25.60px;line-height:25.60px;color:#6b6d85;font-weight:700;">L</div><div class="t" style="left:3242.6px;top:746.7px;font-size:25.60px;line-height:25.60px;color:#6b6d85;font-weight:700;">1</div><div class="a" style="left:505.0px;top:856.0px;width:2881.0px;height:160.0px;background:#ffffff;border-radius:8px;box-shadow:0 1px 3px rgba(40,41,61,0.08),0 0 1px rgba(40,41,61,0.10);"></div><div class="t" style="left:538.5px;top:893.5px;font-size:26.00px;line-height:26.00px;color:#0b0b0d;letter-spacing:-0.474px;-webkit-text-stroke:0.35px #0b0b0d;">bash</div><svg class="a" style="left:610.0px;top:892.5px;" width="33" height="28" viewBox="0 0 33 28"><g fill="none" stroke="#3176d4" stroke-width="1.6"><path d="M16 1.5 L30.5 8.8 L16 16 L1.5 8.8 Z" stroke-dasharray="2.2 2"/><path d="M1.5 14.5 L16 22 L30.5 14.5" /></g></svg><div class="t" style="left:538.5px;top:950.9px;font-size:24.50px;line-height:24.50px;color:#4f5162;letter-spacing:0.042px;">5.1-6ubuntu1</div><div class="t" style="left:920.0px;top:922.9px;font-size:26.00px;line-height:26.00px;color:#4f5162;">-</div><div class="t" style="left:1299.0px;top:923.4px;font-size:25.60px;line-height:25.60px;color:#0b0b0d;letter-spacing:-0.118px;-webkit-text-stroke:0.25px #0b0b0d;">GPL-3.0-only</div><div class="t" style="left:1679.0px;top:923.4px;font-size:25.60px;line-height:25.60px;color:#0b0b0d;letter-spacing:0.511px;-webkit-text-stroke:0.25px #0b0b0d;">deb</div><div class="a" style="left:2060.0px;top:915.0px;width:476.0px;height:43.0px;background:#f3f3fa;border:2px solid #d9dae5;border-radius:8px;box-sizing:border-box;"></div><div class="t" style="left:2068.0px;top:927.2px;font-size:24.00px;line-height:24.00px;color:#0b0b0d;font-family:'Liberation Mono', monospace;">pkg:deb/ubuntu/bash@5.1-6ubuntu1</div><div class="a" style="left:2972.0px;top:918.0px;width:6.0px;height:36.0px;background:#d6412f;"></div><div class="t" style="left:2993.7px;top:922.7px;font-size:25.60px;line-height:25.60px;color:#a8281d;font-weight:700;">C</div><div class="t" style="left:3017.7px;top:922.7px;font-size:25.60px;line-height:25.60px;color:#a8281d;font-weight:700;">0</div><div class="a" style="left:3050.0px;top:918.0px;width:6.0px;height:36.0px;background:#ee5f2c;"></div><div class="t" style="left:3070.8px;top:922.7px;font-size:25.60px;line-height:25.60px;color:#ec5f2b;font-weight:700;">H</div><div class="t" style="left:3094.3px;top:922.7px;font-size:25.60px;line-height:25.60px;color:#ec5f2b;font-weight:700;">1</div><div class="a" style="left:3122.0px;top:918.0px;width:6.0px;height:36.0px;background:#dca13a;"></div><div class="t" style="left:3142.5px;top:922.7px;font-size:25.60px;line-height:25.60px;color:#dca13a;font-weight:700;">M</div><div class="t" style="left:3170.4px;top:922.7px;font-size:25.60px;line-height:25.60px;color:#dca13a;font-weight:700;">0</div><div class="a" style="left:3203.0px;top:918.0px;width:6.0px;height:36.0px;background:#6b6d85;"></div><div class="t" style="left:3223.5px;top:922.7px;font-size:25.60px;line-height:25.60px;color:#6b6d85;font-weight:700;">L</div><div class="t" style="left:3243.1px;top:922.7px;font-size:25.60px;line-height:25.60px;color:#6b6d85;font-weight:700;">0</div><div class="a" style="left:505.0px;top:1032.0px;width:2881.0px;height:160.0px;background:#ffffff;border-radius:8px;box-shadow:0 1px 3px rgba(40,41,61,0.08),0 0 1px rgba(40,41,61,0.10);"></div><div class="t" style="left:538.5px;top:1069.5px;font-size:26.00px;line-height:26.00px;color:#0b0b0d;letter-spacing:0.151px;-webkit-text-stroke:0.35px #0b0b0d;">commons-beanutils</div><svg class="a" style="left:782.0px;top:1068.5px;" width="33" height="28" viewBox="0 0 33 28"><g fill="#3176d4"><path d="M16.3 0.5 L31.5 8.3 L16.3 16.6 L1 8.3 Z"/><path d="M1 12.5 L3.5 11.2 L16.3 18.2 L29.3 11.2 L31.8 12.5 L16.3 20.8 Z"/><path d="M1.5 17.5 L4 16.2 L16.3 22.8 L28.8 16.2 L31.6 17.5 L16.3 26.5 Z"/></g></svg><div class="t" style="left:538.5px;top:1126.9px;font-size:24.50px;line-height:24.50px;color:#4f5162;letter-spacing:-1.005px;">1.8.3</div><svg class="a" style="left:607.5px;top:1131.3px;" width="22" height="18" viewBox="0 0 22 18"><g fill="none" stroke="#6b6d85" stroke-width="2.6" stroke-linecap="round" stroke-linejoin="round"><path d="M2 9 H19 M11.5 1.8 L19 9 L11.5 16.2"/></g></svg><div class="t" style="left:647.0px;top:1126.9px;font-size:24.50px;line-height:24.50px;color:#4f5162;letter-spacing:-2.086px;">1.11.0</div><div class="a" style="left:918.0px;top:1090.0px;width:207.0px;height:44.0px;background:#f8ebea;border-radius:8px;"></div><svg class="a" style="left:930.0px;top:1100.0px;" width="24" height="24" viewBox="0 0 24 24"><g fill="none" stroke="#b52b1f" stroke-width="2.6"><circle cx="12" cy="12" r="10.2"/><path d="M5 19 L19 5"/></g></svg><div class="t" style="left:971.0px;top:1100.0px;font-size:23.50px;line-height:23.50px;color:#b52b1f;font-weight:700;letter-spacing:-0.481px;">END OF LIFE</div><div class="t" style="left:1299.0px;top:1099.4px;font-size:25.60px;line-height:25.60px;color:#0b0b0d;letter-spacing:0.066px;-webkit-text-stroke:0.25px #0b0b0d;">Apache-2.0</div><div class="t" style="left:1679.0px;top:1099.4px;font-size:25.60px;line-height:25.60px;color:#0b0b0d;letter-spacing:-0.576px;-webkit-text-stroke:0.25px #0b0b0d;">maven</div><div class="a" style="left:2060.0px;top:1091.0px;width:491.0px;height:43.0px;background:#f3f3fa;border:2px solid #d9dae5;border-radius:8px;box-sizing:border-box;"></div><div class="t" style="left:2068.0px;top:1103.2px;font-size:24.00px;line-height:24.00px;color:#0b0b0d;font-family:'Liberation Mono', monospace;">pkg:maven/commons-beanutils/comm…</div><div class="t" style="left:2592.0px;top:1099.2px;font-size:25.60px;line-height:25.60px;color:#0b0b0d;letter-spacing:-0.079px;-webkit-text-stroke:0.25px #0b0b0d;">The Apache Software Foun...</div><div class="a" style="left:2972.0px;top:1094.0px;width:6.0px;height:36.0px;background:#d6412f;"></div><div class="t" style="left:2993.7px;top:1098.7px;font-size:25.60px;line-height:25.60px;color:#a8281d;font-weight:700;">C</div><div class="t" style="left:3017.7px;top:1098.7px;font-size:25.60px;line-height:25.60px;color:#a8281d;font-weight:700;">0</div><div class="a" style="left:3050.0px;top:1094.0px;width:6.0px;height:36.0px;background:#ee5f2c;"></div><div class="t" style="left:3070.8px;top:1098.7px;font-size:25.60px;line-height:25.60px;color:#ec5f2b;font-weight:700;">H</div><div class="t" style="left:3095.0px;top:1098.7px;font-size:25.60px;line-height:25.60px;color:#ec5f2b;font-weight:700;">2</div><div class="a" style="left:3125.0px;top:1094.0px;width:6.0px;height:36.0px;background:#dca13a;"></div><div class="t" style="left:3146.0px;top:1098.7px;font-size:25.60px;line-height:25.60px;color:#dca13a;font-weight:700;">M</div><div class="t" style="left:3173.9px;top:1098.7px;font-size:25.60px;line-height:25.60px;color:#dca13a;font-weight:700;">0</div><div class="a" style="left:3206.0px;top:1094.0px;width:6.0px;height:36.0px;background:#6b6d85;"></div><div class="t" style="left:3227.0px;top:1098.7px;font-size:25.60px;line-height:25.60px;color:#6b6d85;font-weight:700;">L</div><div class="t" style="left:3246.6px;top:1098.7px;font-size:25.60px;line-height:25.60px;color:#6b6d85;font-weight:700;">0</div><div class="a" style="left:505.0px;top:1208.0px;width:2881.0px;height:160.0px;background:#ffffff;border-radius:8px;box-shadow:0 1px 3px rgba(40,41,61,0.08),0 0 1px rgba(40,41,61,0.10);"></div><div class="t" style="left:538.5px;top:1245.5px;font-size:26.00px;line-height:26.00px;color:#0b0b0d;letter-spacing:0.318px;-webkit-text-stroke:0.35px #0b0b0d;">commons-codec</div><svg class="a" style="left:748.0px;top:1244.5px;" width="33" height="28" viewBox="0 0 33 28"><g fill="#3176d4"><path d="M16.3 0.5 L31.5 8.3 L16.3 16.6 L1 8.3 Z"/><path d="M1 12.5 L3.5 11.2 L16.3 18.2 L29.3 11.2 L31.8 12.5 L16.3 20.8 Z"/><path d="M1.5 17.5 L4 16.2 L16.3 22.8 L28.8 16.2 L31.6 17.5 L16.3 26.5 Z"/></g></svg><div class="t" style="left:538.5px;top:1302.9px;font-size:24.50px;line-height:24.50px;color:#4f5162;letter-spacing:-1.394px;">1.6</div><div class="a" style="left:918.0px;top:1266.0px;width:196.0px;height:44.0px;background:#fef8ea;border-radius:8px;"></div><svg class="a" style="left:931.0px;top:1277.0px;" width="22" height="22" viewBox="0 0 22 22"><circle cx="11" cy="11" r="10" fill="#f0ab38"/><path d="M9.5 4 V11.5 L14 16" fill="none" stroke="#fef8ea" stroke-width="2.2" stroke-linecap="round"/><path d="M14.5 1 V5" stroke="#fef8ea" stroke-width="2"/></svg><div class="t" style="left:971.0px;top:1276.0px;font-size:23.50px;line-height:23.50px;color:#f0ab38;font-weight:700;letter-spacing:0.329px;">OUTDATED</div><div class="t" style="left:1299.0px;top:1275.4px;font-size:25.60px;line-height:25.60px;color:#0b0b0d;letter-spacing:0.49px;-webkit-text-stroke:0.25px #0b0b0d;">http---www.apache.org-lice...</div><div class="t" style="left:1679.0px;top:1275.4px;font-size:25.60px;line-height:25.60px;color:#0b0b0d;letter-spacing:-0.576px;-webkit-text-stroke:0.25px #0b0b0d;">maven</div><div class="a" style="left:2060.0px;top:1267.0px;width:491.0px;height:43.0px;background:#f3f3fa;border:2px solid #d9dae5;border-radius:8px;box-sizing:border-box;"></div><div class="t" style="left:2068.0px;top:1279.2px;font-size:24.00px;line-height:24.00px;color:#0b0b0d;font-family:'Liberation Mono', monospace;">pkg:maven/commons-codec/commons-…</div><div class="t" style="left:2592.0px;top:1275.2px;font-size:25.60px;line-height:25.60px;color:#0b0b0d;letter-spacing:-0.079px;-webkit-text-stroke:0.25px #0b0b0d;">The Apache Software Foun...</div><div class="a" style="left:2972.0px;top:1270.0px;width:6.0px;height:36.0px;background:#d6412f;"></div><div class="t" style="left:2993.7px;top:1274.7px;font-size:25.60px;line-height:25.60px;color:#a8281d;font-weight:700;">C</div><div class="t" style="left:3017.7px;top:1274.7px;font-size:25.60px;line-height:25.60px;color:#a8281d;font-weight:700;">0</div><div class="a" style="left:3050.0px;top:1270.0px;width:6.0px;height:36.0px;background:#ee5f2c;"></div><div class="t" style="left:3070.8px;top:1274.7px;font-size:25.60px;line-height:25.60px;color:#ec5f2b;font-weight:700;">H</div><div class="t" style="left:3094.8px;top:1274.7px;font-size:25.60px;line-height:25.60px;color:#ec5f2b;font-weight:700;">0</div><div class="a" style="left:3127.0px;top:1270.0px;width:6.0px;height:36.0px;background:#dca13a;"></div><div class="t" style="left:3147.9px;top:1274.7px;font-size:25.60px;line-height:25.60px;color:#dca13a;font-weight:700;">M</div><div class="t" style="left:3175.8px;top:1274.7px;font-size:25.60px;line-height:25.60px;color:#dca13a;font-weight:700;">0</div><div class="a" style="left:3208.0px;top:1270.0px;width:6.0px;height:36.0px;background:#6b6d85;"></div><div class="t" style="left:3228.9px;top:1274.7px;font-size:25.60px;line-height:25.60px;color:#6b6d85;font-weight:700;">L</div><div class="t" style="left:3248.0px;top:1274.7px;font-size:25.60px;line-height:25.60px;color:#6b6d85;font-weight:700;">1</div><div class="a" style="left:505.0px;top:1384.0px;width:2881.0px;height:160.0px;background:#ffffff;border-radius:8px;box-shadow:0 1px 3px rgba(40,41,61,0.08),0 0 1px rgba(40,41,61,0.10);"></div><div class="t" style="left:538.5px;top:1421.5px;font-size:26.00px;line-height:26.00px;color:#0b0b0d;letter-spacing:0.295px;-webkit-text-stroke:0.35px #0b0b0d;">commons-collections</div><svg class="a" style="left:802.0px;top:1420.5px;" width="33" height="28" viewBox="0 0 33 28"><g fill="#3176d4"><path d="M16.3 0.5 L31.5 8.3 L16.3 16.6 L1 8.3 Z"/><path d="M1 12.5 L3.5 11.2 L16.3 18.2 L29.3 11.2 L31.8 12.5 L16.3 20.8 Z"/><path d="M1.5 17.5 L4 16.2 L16.3 22.8 L28.8 16.2 L31.6 17.5 L16.3 26.5 Z"/></g></svg><div class="t" style="left:538.5px;top:1478.9px;font-size:24.50px;line-height:24.50px;color:#4f5162;letter-spacing:-1.005px;">3.2.1</div><div class="a" style="left:918.0px;top:1442.0px;width:207.0px;height:44.0px;background:#f8ebea;border-radius:8px;"></div><svg class="a" style="left:930.0px;top:1452.0px;" width="24" height="24" viewBox="0 0 24 24"><g fill="none" stroke="#b52b1f" stroke-width="2.6"><circle cx="12" cy="12" r="10.2"/><path d="M5 19 L19 5"/></g></svg><div class="t" style="left:971.0px;top:1452.0px;font-size:23.50px;line-height:23.50px;color:#b52b1f;font-weight:700;letter-spacing:-0.481px;">END OF LIFE</div><div class="t" style="left:1299.0px;top:1451.4px;font-size:25.60px;line-height:25.60px;color:#0b0b0d;letter-spacing:0.066px;-webkit-text-stroke:0.25px #0b0b0d;">Apache-2.0</div><div class="t" style="left:1679.0px;top:1451.4px;font-size:25.60px;line-height:25.60px;color:#0b0b0d;letter-spacing:-0.576px;-webkit-text-stroke:0.25px #0b0b0d;">maven</div><div class="a" style="left:2060.0px;top:1443.0px;width:491.0px;height:43.0px;background:#f3f3fa;border:2px solid #d9dae5;border-radius:8px;box-sizing:border-box;"></div><div class="t" style="left:2068.0px;top:1455.2px;font-size:24.00px;line-height:24.00px;color:#0b0b0d;font-family:'Liberation Mono', monospace;">pkg:maven/commons-collections/co…</div><div class="t" style="left:2592.0px;top:1451.2px;font-size:25.60px;line-height:25.60px;color:#0b0b0d;letter-spacing:-0.079px;-webkit-text-stroke:0.25px #0b0b0d;">The Apache Software Foun...</div><div class="a" style="left:2972.0px;top:1446.0px;width:6.0px;height:36.0px;background:#d6412f;"></div><div class="t" style="left:2993.7px;top:1450.7px;font-size:25.60px;line-height:25.60px;color:#a8281d;font-weight:700;">C</div><div class="t" style="left:3017.9px;top:1450.7px;font-size:25.60px;line-height:25.60px;color:#a8281d;font-weight:700;">2</div><div class="a" style="left:3048.0px;top:1446.0px;width:6.0px;height:36.0px;background:#ee5f2c;"></div><div class="t" style="left:3068.9px;top:1450.7px;font-size:25.60px;line-height:25.60px;color:#ec5f2b;font-weight:700;">H</div><div class="t" style="left:3092.9px;top:1450.7px;font-size:25.60px;line-height:25.60px;color:#ec5f2b;font-weight:700;">0</div><div class="a" style="left:3125.0px;top:1446.0px;width:6.0px;height:36.0px;background:#dca13a;"></div><div class="t" style="left:3146.0px;top:1450.7px;font-size:25.60px;line-height:25.60px;color:#dca13a;font-weight:700;">M</div><div class="t" style="left:3173.4px;top:1450.7px;font-size:25.60px;line-height:25.60px;color:#dca13a;font-weight:700;">1</div><div class="a" style="left:3201.0px;top:1446.0px;width:6.0px;height:36.0px;background:#6b6d85;"></div><div class="t" style="left:3221.6px;top:1450.7px;font-size:25.60px;line-height:25.60px;color:#6b6d85;font-weight:700;">L</div><div class="t" style="left:3241.2px;top:1450.7px;font-size:25.60px;line-height:25.60px;color:#6b6d85;font-weight:700;">0</div><div class="a" style="left:505.0px;top:1560.0px;width:2881.0px;height:160.0px;background:#ffffff;border-radius:8px;box-shadow:0 1px 3px rgba(40,41,61,0.08),0 0 1px rgba(40,41,61,0.10);"></div><div class="t" style="left:538.5px;top:1597.5px;font-size:26.00px;line-height:26.00px;color:#0b0b0d;letter-spacing:0.127px;-webkit-text-stroke:0.35px #0b0b0d;">commons-compress</div><svg class="a" style="left:790.0px;top:1596.5px;" width="33" height="28" viewBox="0 0 33 28"><g fill="#3176d4"><path d="M16.3 0.5 L31.5 8.3 L16.3 16.6 L1 8.3 Z"/><path d="M1 12.5 L3.5 11.2 L16.3 18.2 L29.3 11.2 L31.8 12.5 L16.3 20.8 Z"/><path d="M1.5 17.5 L4 16.2 L16.3 22.8 L28.8 16.2 L31.6 17.5 L16.3 26.5 Z"/></g></svg><div class="t" style="left:538.5px;top:1654.9px;font-size:24.50px;line-height:24.50px;color:#4f5162;letter-spacing:-2.255px;">1.4.1</div><svg class="a" style="left:602.4px;top:1659.3px;" width="22" height="18" viewBox="0 0 22 18"><g fill="none" stroke="#6b6d85" stroke-width="2.6" stroke-linecap="round" stroke-linejoin="round"><path d="M2 9 H19 M11.5 1.8 L19 9 L11.5 16.2"/></g></svg><div class="t" style="left:641.9px;top:1654.9px;font-size:24.50px;line-height:24.50px;color:#4f5162;letter-spacing:-0.43px;">1.28.0</div><div class="a" style="left:918.0px;top:1618.0px;width:207.0px;height:44.0px;background:#f8ebea;border-radius:8px;"></div><svg class="a" style="left:930.0px;top:1628.0px;" width="24" height="24" viewBox="0 0 24 24"><g fill="none" stroke="#b52b1f" stroke-width="2.6"><circle cx="12" cy="12" r="10.2"/><path d="M5 19 L19 5"/></g></svg><div class="t" style="left:971.0px;top:1628.0px;font-size:23.50px;line-height:23.50px;color:#b52b1f;font-weight:700;letter-spacing:-0.481px;">END OF LIFE</div><div class="t" style="left:1299.0px;top:1627.4px;font-size:25.60px;line-height:25.60px;color:#0b0b0d;letter-spacing:0.49px;-webkit-text-stroke:0.25px #0b0b0d;">http---www.apache.org-lice...</div><div class="t" style="left:1679.0px;top:1627.4px;font-size:25.60px;line-height:25.60px;color:#0b0b0d;letter-spacing:-0.576px;-webkit-text-stroke:0.25px #0b0b0d;">maven</div><div class="a" style="left:2060.0px;top:1619.0px;width:491.0px;height:43.0px;background:#f3f3fa;border:2px solid #d9dae5;border-radius:8px;box-sizing:border-box;"></div><div class="t" style="left:2068.0px;top:1631.2px;font-size:24.00px;line-height:24.00px;color:#0b0b0d;font-family:'Liberation Mono', monospace;">pkg:maven/org.apache.commons/com…</div><div class="t" style="left:2592.0px;top:1627.2px;font-size:25.60px;line-height:25.60px;color:#0b0b0d;letter-spacing:-0.079px;-webkit-text-stroke:0.25px #0b0b0d;">The Apache Software Foun...</div><div class="a" style="left:2972.0px;top:1622.0px;width:6.0px;height:36.0px;background:#d6412f;"></div><div class="t" style="left:2993.7px;top:1626.7px;font-size:25.60px;line-height:25.60px;color:#a8281d;font-weight:700;">C</div><div class="t" style="left:3017.7px;top:1626.7px;font-size:25.60px;line-height:25.60px;color:#a8281d;font-weight:700;">0</div><div class="a" style="left:3050.0px;top:1622.0px;width:6.0px;height:36.0px;background:#ee5f2c;"></div><div class="t" style="left:3070.8px;top:1626.7px;font-size:25.60px;line-height:25.60px;color:#ec5f2b;font-weight:700;">H</div><div class="t" style="left:3095.0px;top:1626.7px;font-size:25.60px;line-height:25.60px;color:#ec5f2b;font-weight:700;">2</div><div class="a" style="left:3125.0px;top:1622.0px;width:6.0px;height:36.0px;background:#dca13a;"></div><div class="t" style="left:3146.0px;top:1626.7px;font-size:25.60px;line-height:25.60px;color:#dca13a;font-weight:700;">M</div><div class="t" style="left:3174.1px;top:1626.7px;font-size:25.60px;line-height:25.60px;color:#dca13a;font-weight:700;">2</div><div class="a" style="left:3204.0px;top:1622.0px;width:6.0px;height:36.0px;background:#6b6d85;"></div><div class="t" style="left:3225.1px;top:1626.7px;font-size:25.60px;line-height:25.60px;color:#6b6d85;font-weight:700;">L</div><div class="t" style="left:3244.7px;top:1626.7px;font-size:25.60px;line-height:25.60px;color:#6b6d85;font-weight:700;">0</div><div class="a" style="left:505.0px;top:1736.0px;width:2881.0px;height:160.0px;background:#ffffff;border-radius:8px;box-shadow:0 1px 3px rgba(40,41,61,0.08),0 0 1px rgba(40,41,61,0.10);"></div><div class="t" style="left:538.5px;top:1773.5px;font-size:26.00px;line-height:26.00px;color:#0b0b0d;letter-spacing:0.291px;-webkit-text-stroke:0.35px #0b0b0d;">commons-configuration</div><svg class="a" style="left:830.0px;top:1772.5px;" width="33" height="28" viewBox="0 0 33 28"><g fill="#3176d4"><path d="M16.3 0.5 L31.5 8.3 L16.3 16.6 L1 8.3 Z"/><path d="M1 12.5 L3.5 11.2 L16.3 18.2 L29.3 11.2 L31.8 12.5 L16.3 20.8 Z"/><path d="M1.5 17.5 L4 16.2 L16.3 22.8 L28.8 16.2 L31.6 17.5 L16.3 26.5 Z"/></g></svg><div class="t" style="left:538.5px;top:1830.9px;font-size:24.50px;line-height:24.50px;color:#4f5162;letter-spacing:-1.394px;">1.6</div><div class="a" style="left:918.0px;top:1794.0px;width:196.0px;height:44.0px;background:#fef8ea;border-radius:8px;"></div><svg class="a" style="left:931.0px;top:1805.0px;" width="22" height="22" viewBox="0 0 22 22"><circle cx="11" cy="11" r="10" fill="#f0ab38"/><path d="M9.5 4 V11.5 L14 16" fill="none" stroke="#fef8ea" stroke-width="2.2" stroke-linecap="round"/><path d="M14.5 1 V5" stroke="#fef8ea" stroke-width="2"/></svg><div class="t" style="left:971.0px;top:1804.0px;font-size:23.50px;line-height:23.50px;color:#f0ab38;font-weight:700;letter-spacing:0.329px;">OUTDATED</div><div class="t" style="left:1299.0px;top:1803.4px;font-size:25.60px;line-height:25.60px;color:#0b0b0d;letter-spacing:0.49px;-webkit-text-stroke:0.25px #0b0b0d;">http---www.apache.org-lice...</div><div class="t" style="left:1679.0px;top:1803.4px;font-size:25.60px;line-height:25.60px;color:#0b0b0d;letter-spacing:-0.576px;-webkit-text-stroke:0.25px #0b0b0d;">maven</div><div class="a" style="left:2060.0px;top:1795.0px;width:491.0px;height:43.0px;background:#f3f3fa;border:2px solid #d9dae5;border-radius:8px;box-sizing:border-box;"></div><div class="t" style="left:2068.0px;top:1807.2px;font-size:24.00px;line-height:24.00px;color:#0b0b0d;font-family:'Liberation Mono', monospace;">pkg:maven/commons-configuration/…</div><div class="t" style="left:2592.0px;top:1803.2px;font-size:25.60px;line-height:25.60px;color:#0b0b0d;letter-spacing:-0.079px;-webkit-text-stroke:0.25px #0b0b0d;">The Apache Software Foun...</div><div class="a" style="left:2972.0px;top:1798.0px;width:6.0px;height:36.0px;background:#d6412f;"></div><div class="t" style="left:2993.7px;top:1802.7px;font-size:25.60px;line-height:25.60px;color:#a8281d;font-weight:700;">C</div><div class="t" style="left:3017.7px;top:1802.7px;font-size:25.60px;line-height:25.60px;color:#a8281d;font-weight:700;">0</div><div class="a" style="left:3050.0px;top:1798.0px;width:6.0px;height:36.0px;background:#ee5f2c;"></div><div class="t" style="left:3070.8px;top:1802.7px;font-size:25.60px;line-height:25.60px;color:#ec5f2b;font-weight:700;">H</div><div class="t" style="left:3094.8px;top:1802.7px;font-size:25.60px;line-height:25.60px;color:#ec5f2b;font-weight:700;">0</div><div class="a" style="left:3127.0px;top:1798.0px;width:6.0px;height:36.0px;background:#dca13a;"></div><div class="t" style="left:3147.9px;top:1802.7px;font-size:25.60px;line-height:25.60px;color:#dca13a;font-weight:700;">M</div><div class="t" style="left:3175.3px;top:1802.7px;font-size:25.60px;line-height:25.60px;color:#dca13a;font-weight:700;">1</div><div class="a" style="left:3203.0px;top:1798.0px;width:6.0px;height:36.0px;background:#6b6d85;"></div><div class="t" style="left:3223.5px;top:1802.7px;font-size:25.60px;line-height:25.60px;color:#6b6d85;font-weight:700;">L</div><div class="t" style="left:3243.1px;top:1802.7px;font-size:25.60px;line-height:25.60px;color:#6b6d85;font-weight:700;">0</div><div class="a" style="left:505.0px;top:1912.0px;width:2881.0px;height:160.0px;background:#ffffff;border-radius:8px;box-shadow:0 1px 3px rgba(40,41,61,0.08),0 0 1px rgba(40,41,61,0.10);"></div><div class="t" style="left:538.5px;top:1949.5px;font-size:26.00px;line-height:26.00px;color:#0b0b0d;letter-spacing:0.199px;-webkit-text-stroke:0.35px #0b0b0d;">commons-fileupload</div><svg class="a" style="left:790.0px;top:1948.5px;" width="33" height="28" viewBox="0 0 33 28"><g fill="#3176d4"><path d="M16.3 0.5 L31.5 8.3 L16.3 16.6 L1 8.3 Z"/><path d="M1 12.5 L3.5 11.2 L16.3 18.2 L29.3 11.2 L31.8 12.5 L16.3 20.8 Z"/><path d="M1.5 17.5 L4 16.2 L16.3 22.8 L28.8 16.2 L31.6 17.5 L16.3 26.5 Z"/></g></svg><div class="t" style="left:538.5px;top:2006.9px;font-size:24.50px;line-height:24.50px;color:#4f5162;letter-spacing:-2.255px;">1.3.1</div><div class="a" style="left:918.0px;top:1970.0px;width:207.0px;height:44.0px;background:#f8ebea;border-radius:8px;"></div><svg class="a" style="left:930.0px;top:1980.0px;" width="24" height="24" viewBox="0 0 24 24"><g fill="none" stroke="#b52b1f" stroke-width="2.6"><circle cx="12" cy="12" r="10.2"/><path d="M5 19 L19 5"/></g></svg><div class="t" style="left:971.0px;top:1980.0px;font-size:23.50px;line-height:23.50px;color:#b52b1f;font-weight:700;letter-spacing:-0.481px;">END OF LIFE</div><div class="t" style="left:1299.0px;top:1979.4px;font-size:25.60px;line-height:25.60px;color:#0b0b0d;letter-spacing:0.066px;-webkit-text-stroke:0.25px #0b0b0d;">Apache-2.0</div><div class="t" style="left:1679.0px;top:1979.4px;font-size:25.60px;line-height:25.60px;color:#0b0b0d;letter-spacing:-0.576px;-webkit-text-stroke:0.25px #0b0b0d;">maven</div><div class="a" style="left:2060.0px;top:1971.0px;width:491.0px;height:43.0px;background:#f3f3fa;border:2px solid #d9dae5;border-radius:8px;box-sizing:border-box;"></div><div class="t" style="left:2068.0px;top:1983.2px;font-size:24.00px;line-height:24.00px;color:#0b0b0d;font-family:'Liberation Mono', monospace;">pkg:maven/commons-fileupload/com…</div><div class="t" style="left:2592.0px;top:1979.2px;font-size:25.60px;line-height:25.60px;color:#0b0b0d;letter-spacing:-0.079px;-webkit-text-stroke:0.25px #0b0b0d;">The Apache Software Foun...</div><div class="a" style="left:2972.0px;top:1974.0px;width:6.0px;height:36.0px;background:#d6412f;"></div><div class="t" style="left:2993.7px;top:1978.7px;font-size:25.60px;line-height:25.60px;color:#a8281d;font-weight:700;">C</div><div class="t" style="left:3017.2px;top:1978.7px;font-size:25.60px;line-height:25.60px;color:#a8281d;font-weight:700;">1</div><div class="a" style="left:3044.0px;top:1974.0px;width:6.0px;height:36.0px;background:#ee5f2c;"></div><div class="t" style="left:3065.4px;top:1978.7px;font-size:25.60px;line-height:25.60px;color:#ec5f2b;font-weight:700;">H</div><div class="t" style="left:3089.4px;top:1978.7px;font-size:25.60px;line-height:25.60px;color:#ec5f2b;font-weight:700;">0</div><div class="a" style="left:3122.0px;top:1974.0px;width:6.0px;height:36.0px;background:#dca13a;"></div><div class="t" style="left:3142.5px;top:1978.7px;font-size:25.60px;line-height:25.60px;color:#dca13a;font-weight:700;">M</div><div class="t" style="left:3170.4px;top:1978.7px;font-size:25.60px;line-height:25.60px;color:#dca13a;font-weight:700;">0</div><div class="a" style="left:3203.0px;top:1974.0px;width:6.0px;height:36.0px;background:#6b6d85;"></div><div class="t" style="left:3223.5px;top:1978.7px;font-size:25.60px;line-height:25.60px;color:#6b6d85;font-weight:700;">L</div><div class="t" style="left:3243.1px;top:1978.7px;font-size:25.60px;line-height:25.60px;color:#6b6d85;font-weight:700;">0</div>
</body></html>
